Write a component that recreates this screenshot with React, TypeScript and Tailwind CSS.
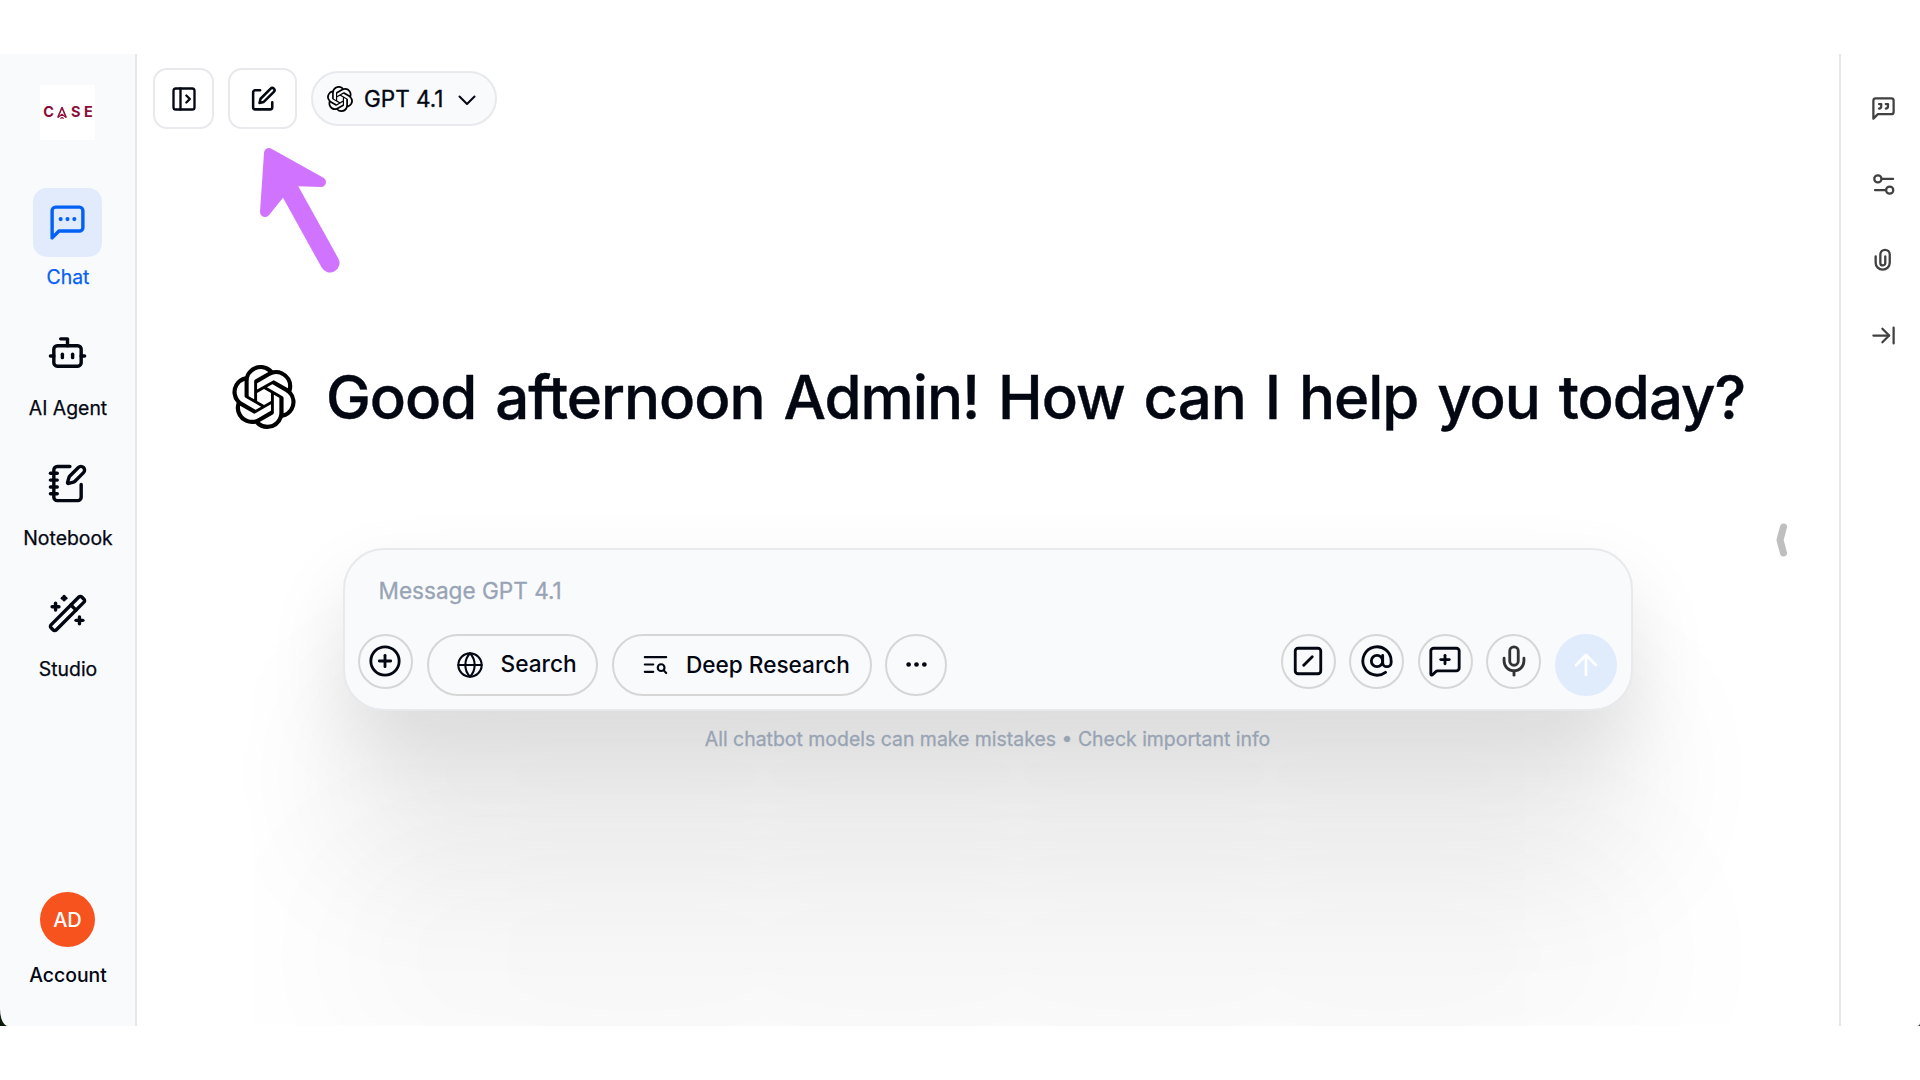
import React from "react";
import { ArrowUp, AtSign, Bot, Globe, MessageSquarePlus, Mic, NotebookPen, PanelLeftOpen, SquareSlash, WandSparkles, ArrowRightToLine, CirclePlus, Ellipsis } from "lucide-react";
import { SiOpenai } from "react-icons/si";

function ChatIcon() {
  return (
    <svg className="size-[41px]" viewBox="0 0 24 24" fill="none" stroke="currentColor" strokeWidth="2" strokeLinecap="round" strokeLinejoin="round">
      <path d="M21 15a2 2 0 0 1-2 2H7l-4 4V5a2 2 0 0 1 2-2h14a2 2 0 0 1 2 2z" />
      <path d="M8 10h.01M12 10h.01M16 10h.01" strokeWidth="2.4" />
    </svg>
  );
}

function EditIcon() {
  return (
    <svg className="size-[25.5px]" viewBox="0 0 24 24" fill="none" stroke="currentColor" strokeWidth="2.4" strokeLinecap="round" strokeLinejoin="round">
      <path d="M8.6 4H4a2 2 0 0 0-2 2v14a2 2 0 0 0 2 2h14a2 2 0 0 0 2-2v-4.600" />
      <path d="M18.500 2.500a2.121 2.121 0 0 1 3 3L12 15l-4 1 1-4z" />
    </svg>
  );
}

function QuoteIcon() {
  return (
    <svg className="size-[27px]" viewBox="0 0 24 24" fill="none" stroke="currentColor" strokeWidth="2" strokeLinecap="round" strokeLinejoin="round">
      <path d="M21 15a2 2 0 0 1-2 2H7l-4 4V5a2 2 0 0 1 2-2h14a2 2 0 0 1 2 2z" />
      <path d="M8 12a2 2 0 0 0 2-2V8H8" />
      <path d="M14 12a2 2 0 0 0 2-2V8h-2" />
    </svg>
  );
}

function SlidersIcon() {
  return (
    <svg className="size-[27px]" viewBox="0 0 24 24" fill="none" stroke="currentColor" strokeWidth="2" strokeLinecap="round" strokeLinejoin="round">
      <path d="M20.500 7h-10" />
      <path d="M14 17H4.500" />
      <circle cx="17.500" cy="17" r="3.200" />
      <circle cx="7" cy="7" r="3.200" />
    </svg>
  );
}

function ClipIcon() {
  return (
    <svg className="size-[27.500px]" viewBox="0 0 24 24" fill="none" stroke="currentColor" strokeWidth="2" strokeLinecap="round" strokeLinejoin="round">
      <path d="M5.800 9v5.600a6.150 6.100 0 0 0 12.300 0V7.400a4.100 4.100 0 0 0-8.200 0v7.400a2.150 2.150 0 0 0 4.300 0V9" />
    </svg>
  );
}

function ResearchIcon() {
  return (
    <svg className="size-[27px]" viewBox="0 0 24 24" fill="none" stroke="currentColor" strokeWidth="1.900" strokeLinecap="round" strokeLinejoin="round">
      <path d="M2.500 5.500h19M2.500 12h7.500M2.500 18.500h7.500" />
      <circle cx="17" cy="14.800" r="3" />
      <path d="m19.300 17.200 2.200 2.400" />
    </svg>
  );
}

function CaseLogo() {
  return (
    <div className="flex size-[55px] items-center justify-center gap-[3.500px] bg-white pl-px text-[14.500px] leading-none font-bold text-[#8d0d36]">
      <span>C</span>
      <svg className="h-[13px] w-[10px] shrink-0" viewBox="0 0 10 13" fill="none" stroke="currentColor" strokeWidth="1.600" strokeLinejoin="round" strokeLinecap="round">
        <path d="M1 11 5 1.500 9 11" />
        <path d="M1.500 11 5 8.300 8.500 11M3.800 12.300 5 11.500 6.200 12.300" strokeWidth="1.200" />
      </svg>
      <span>S</span>
      <span>E</span>
    </div>
  );
}

function NavItem({ label, children, active = false }: { label: string; children: React.ReactNode; active?: boolean }) {
  return (
    <div className={active ? "flex h-[130.500px] flex-col items-center text-[#0561f5]" : "flex h-[130.500px] flex-col items-center text-[#030712]"}>
      <div className={active ? "flex size-[69px] items-center justify-center rounded-[14px] bg-[#e1ebfc]" : "flex size-[69px] items-center justify-center pb-px"}>{children}</div>
      <span className="mt-[6px] pl-px text-[19.400px] leading-[28px] [-webkit-text-stroke:0.25px]">{label}</span>
    </div>
  );
}

function RoundButton({ children }: { children: React.ReactNode }) {
  return <button className="flex size-[55px] shrink-0 items-center justify-center rounded-full border-2 border-[#d6d6d6]">{children}</button>;
}

export default function App() {
  return (
    <div className="h-[1080px] w-[1920px] overflow-hidden bg-white py-[54px] font-['Inter',sans-serif] text-[#030712]">
      <div className="flex h-[972px] overflow-hidden bg-[#0b1a08]">
        <aside className="flex w-[137px] shrink-0 flex-col items-center rounded-bl-[8px_17px] border-r-2 border-[#e5e7eb] bg-[#f9fafc] pt-[31px]">
          <CaseLogo />
          <nav className="mt-[48px] flex flex-col">
            <NavItem label="Chat" active><ChatIcon /></NavItem>
            <NavItem label="AI Agent"><Bot size={41} /></NavItem>
            <NavItem label="Notebook"><NotebookPen size={41} /></NavItem>
            <NavItem label="Studio"><WandSparkles size={41} /></NavItem>
          </nav>
          <div className="mt-auto mb-[37.500px] flex flex-col items-center">
            <div className="flex size-[55px] items-center justify-center rounded-full bg-[#f6531f] text-[20px] font-medium text-white">AD</div>
            <span className="mt-[13.500px] pl-px text-[19.400px] leading-[28px] font-medium">Account</span>
          </div>
        </aside>

        <main className="relative flex w-[1702px] shrink-0 flex-col overflow-hidden bg-white">
          <header className="flex items-center pt-[14px] pl-[16px]">
            <button className="flex size-[61px] items-center justify-center rounded-[14px] border-2 border-[#e8e9ed]"><PanelLeftOpen size={28} /></button>
            <button className="ml-[14px] flex h-[61px] w-[69px] items-center justify-center rounded-[14px] border-2 border-[#e8e9ed] pl-[2px]"><EditIcon /></button>
            <button className="ml-[14px] flex h-[55px] w-[186px] items-center rounded-full border-2 border-[#e8e9ed] bg-[#f9fafc] pl-[14px]">
              <SiOpenai size={26} color="#000" />
              <span className="ml-[11px] text-[22.500px] [-webkit-text-stroke:0.35px]">GPT 4.1</span>
              <svg className="mt-[3px] ml-[15px] h-[12px] w-[18px]" viewBox="0 0 18 12" fill="none" stroke="currentColor" strokeWidth="2" strokeLinecap="round" strokeLinejoin="round"><path d="M1.500 2.500 9 10 16.500 2.500" /></svg>
            </button>
          </header>

          <svg className="absolute top-[86px] left-[113px] h-[150px] w-[100px]" viewBox="250 140 100 150" fill="#d074ff" stroke="#d074ff" strokeLinejoin="round" strokeLinecap="round">
            <path d="M269 153 321 182 290 181 265 212z" strokeWidth="10" />
            <path d="M284 180 330 263" strokeWidth="19" />
          </svg>

          <h1 className="mt-[228px] ml-[95px] flex items-center text-[60px] leading-[80px] font-medium tracking-[-1px] whitespace-nowrap [word-spacing:3.800px]">
            <SiOpenai size={64} color="#000" className="shrink-0" />
            <span className="ml-[30px] [-webkit-text-stroke:0.4px]">Good afternoon Admin! How can I help you today?</span>
          </h1>

          <section className="mt-[111px] ml-[206px] flex h-[163px] w-[1290px] flex-col rounded-[41px] border-2 border-[#e8e9ed] bg-[#f9fafc] pr-[14px] pl-[12.500px] shadow-[0_37px_80px_rgba(0,0,0,0.1),0_145px_145px_rgba(0,0,0,0.09),0_327px_196px_rgba(0,0,0,0.05)]">
            <div className="mt-[25px] ml-[21px] text-[22.600px] leading-[32px] text-[#98a4b4] [-webkit-text-stroke:0.3px]">Message GPT 4.1</div>
            <div className="mt-[26.500px] flex items-start">
              <RoundButton><CirclePlus size={34} /></RoundButton>
              <button className="ml-[14px] flex h-[62px] w-[171px] items-center rounded-full border-2 border-[#d6d6d6] pl-[27px] text-[22.700px] font-medium"><Globe size={28} strokeWidth={1.800} /><span className="ml-[17px]">Search</span></button>
              <button className="ml-[14px] flex h-[62px] w-[260px] items-center rounded-full border-2 border-[#d6d6d6] pl-[28px] text-[22.600px] font-medium whitespace-nowrap"><ResearchIcon /><span className="ml-[17.500px]">Deep Research</span></button>
              <button className="ml-[13.500px] flex size-[62px] items-center justify-center rounded-full border-2 border-[#d6d6d6]"><Ellipsis size={27} strokeWidth={2.200} /></button>
              <div className="ml-auto flex gap-[13.600px]">
                <RoundButton><SquareSlash size={34} /></RoundButton>
                <RoundButton><AtSign size={34} /></RoundButton>
                <RoundButton><MessageSquarePlus size={34} /></RoundButton>
                <RoundButton><Mic size={34} color="#333" /></RoundButton>
                <button className="flex size-[62px] items-center justify-center rounded-full bg-[#e0ebfc] text-white"><ArrowUp size={34} /></button>
              </div>
            </div>
          </section>
          <p className="mt-[12.500px] ml-[206px] w-[1289px] text-center text-[19.450px] leading-[30px] text-[#98a4b4] [-webkit-text-stroke:0.3px]">All chatbot models can make mistakes &bull; Check important info</p>

          <svg className="absolute top-[468px] left-[1637px] h-[36px] w-[16px]" viewBox="0 0 16 36" fill="none" stroke="#bfbfbf" strokeWidth="7" strokeLinecap="round" strokeLinejoin="round"><path d="M9.500 5 6 18 9.500 31" /></svg>
        </main>

        <aside className="flex flex-1 flex-col items-center gap-[48.500px] rounded-br-[3px] border-l-2 border-[#e5e7eb] bg-white pt-[41px] pl-[5px] text-[#404040]">
          <QuoteIcon />
          <SlidersIcon />
          <ClipIcon />
          <ArrowRightToLine size={27} />
        </aside>
      </div>
    </div>
  );
}
